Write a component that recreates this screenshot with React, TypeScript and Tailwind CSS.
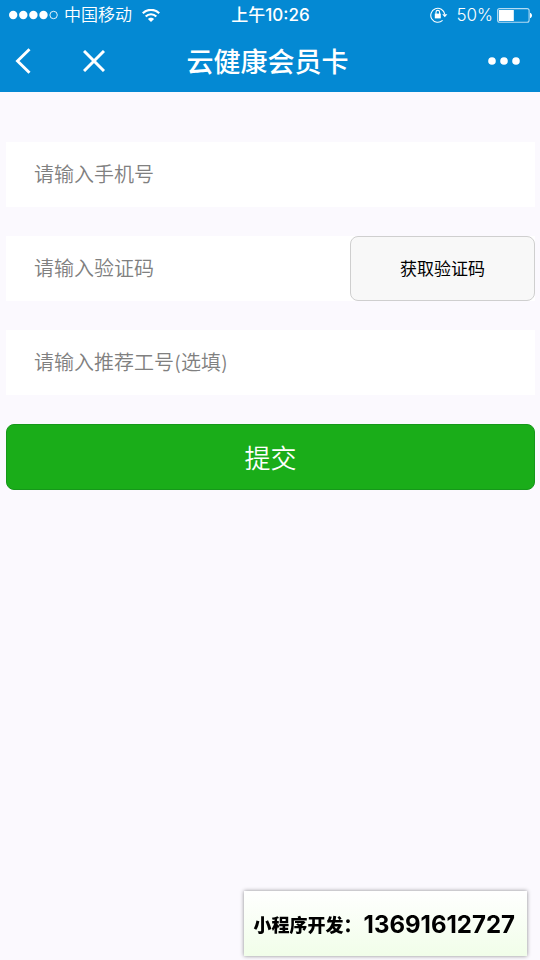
import { useState } from 'react';
import type { FormEvent } from 'react';

function StatusBar() {
  return (
    <div className="grid h-[30px] grid-cols-[1fr_auto_1fr] items-center pl-[9px] pr-2 text-[17px] leading-6">
      <div className="flex items-center gap-[6px]">
        <svg width="49" height="10" viewBox="0 0 49 10" fill="currentColor" aria-hidden="true">
          <circle cx="4.2" cy="5" r="4.2" />
          <circle cx="14.3" cy="5" r="4.2" />
          <circle cx="24.4" cy="5" r="4.2" />
          <circle cx="34.5" cy="5" r="4.2" />
          <circle cx="44.6" cy="5" r="3.7" fill="none" stroke="currentColor" strokeWidth="0.9" />
        </svg>
        <span className="font-[350]">中国移动</span>
        <svg className="ml-1" width="18" height="13" viewBox="0 0 18 13" fill="none" stroke="currentColor" aria-hidden="true">
          <path d="M0.8 4.3C5.2 -0.3 12.8 -0.3 17.2 4.3" strokeWidth="2.2" />
          <path d="M3.7 7.5C6.6 4.5 11.4 4.5 14.3 7.5" strokeWidth="2.2" />
          <path d="M5.9 10C7.6 8.2 10.4 8.2 12.1 10L9 13Z" fill="currentColor" stroke="none" />
        </svg>
      </div>
      <time className="font-medium">上午10:26</time>
      <div className="flex items-center justify-end">
        <svg className="mr-2" width="18" height="16" viewBox="0 0 18 16" fill="none" stroke="currentColor" aria-hidden="true">
          <path d="M12.6 13.4A7 7 0 1 1 14.7 7.2" strokeWidth="1.1" />
          <path d="M12.2 7.2H17.4L14.8 10.2Z" fill="currentColor" stroke="none" />
          <rect x="4.8" y="6.6" width="6" height="4.8" fill="currentColor" stroke="none" />
          <path d="M6 7V5.2A1.8 1.8 0 0 1 9.6 5.2V7" strokeWidth="1.1" />
        </svg>
        <span className="mr-1 font-[350]">50%</span>
        <svg width="35" height="15" viewBox="0 0 35 15" aria-hidden="true">
          <rect x="0.6" y="0.6" width="31.5" height="13.6" rx="2" fill="none" stroke="#b5dcf3" strokeWidth="1.1" />
          <rect x="1.8" y="2" width="15" height="11" fill="#fff" />
          <path d="M33 4.8C34.5 5.4 35 6.5 35 7.5S34.5 9.6 33 10.2Z" fill="#fff" />
        </svg>
      </div>
    </div>
  );
}

function NavBar() {
  return (
    <div className="grid h-[62px] grid-cols-[1fr_auto_1fr] items-center pl-[15px] pr-5">
      <div className="flex items-center gap-[50px]">
        <button type="button" aria-label="返回">
          <svg width="18" height="26" viewBox="0 0 18 26" fill="none" stroke="currentColor" strokeWidth="2.9">
            <path d="M14.5 1.2L2.5 13L14.5 24.8" />
          </svg>
        </button>
        <button type="button" aria-label="关闭">
          <svg width="22" height="22" viewBox="0 0 22 22" fill="none" stroke="currentColor" strokeWidth="3">
            <path d="M1 1L21 21M21 1L1 21" />
          </svg>
        </button>
      </div>
      <h1 className="pt-[3px] text-[27px] leading-9 font-medium">云健康会员卡</h1>
      <button type="button" aria-label="更多" className="justify-self-end">
        <svg width="32" height="8" viewBox="0 0 32 8" fill="currentColor">
          <circle cx="4" cy="4" r="3.8" />
          <circle cx="16" cy="4" r="3.8" />
          <circle cx="28" cy="4" r="3.8" />
        </svg>
      </button>
    </div>
  );
}

const inputClass =
  'h-[65px] w-full min-w-0 bg-white px-7 text-[20px] text-black outline-none placeholder:font-[350] placeholder:text-[#808080]';

export default function App() {
  const [phone, setPhone] = useState('');
  const [code, setCode] = useState('');
  const [staffNo, setStaffNo] = useState('');

  const handleSubmit = (e: FormEvent) => {
    e.preventDefault();
  };

  return (
    <div className="min-h-screen bg-[#fbf9fe] font-[Inter,'Noto_Sans_CJK_SC',sans-serif]">
      <header className="bg-[#0489d3] text-white">
        <StatusBar />
        <NavBar />
      </header>

      <form onSubmit={handleSubmit} className="flex flex-col gap-[29px] pt-[50px] pl-[6px] pr-[5px]">
        <input
          type="tel"
          aria-label="手机号"
          placeholder="请输入手机号"
          className={inputClass}
          value={phone}
          onChange={(e) => setPhone(e.target.value)}
        />
        <div className="flex bg-white">
          <input
            type="text"
            aria-label="验证码"
            placeholder="请输入验证码"
            className={inputClass}
            value={code}
            onChange={(e) => setCode(e.target.value)}
          />
          <button type="button" className="w-[35%] shrink-0 rounded-lg border border-[#cfcfcf] bg-[#f8f8f8] pt-[3px] text-[17px] text-black">
            获取验证码
          </button>
        </div>
        <input
          type="text"
          aria-label="推荐工号"
          placeholder="请输入推荐工号(选填)"
          className={inputClass}
          value={staffNo}
          onChange={(e) => setStaffNo(e.target.value)}
        />
        <button type="submit" className="h-[66px] rounded-lg border border-[#16981a] bg-[#1aad19] pt-[3px] text-[26px] font-[350] text-white">
          提交
        </button>
      </form>

      <aside className="fixed right-[13px] bottom-1 flex h-[65px] items-center gap-[2px] bg-linear-to-b from-white to-[#f1fee9] pt-[3px] pr-3 pl-[10px] text-black shadow-[0_0_4px_rgba(0,0,0,0.45)]">
        <span className="text-[18px] font-black">小程序开发：</span>
        <a href="tel:13691612727" className="text-[24px] font-bold">13691612727</a>
      </aside>
    </div>
  );
}
